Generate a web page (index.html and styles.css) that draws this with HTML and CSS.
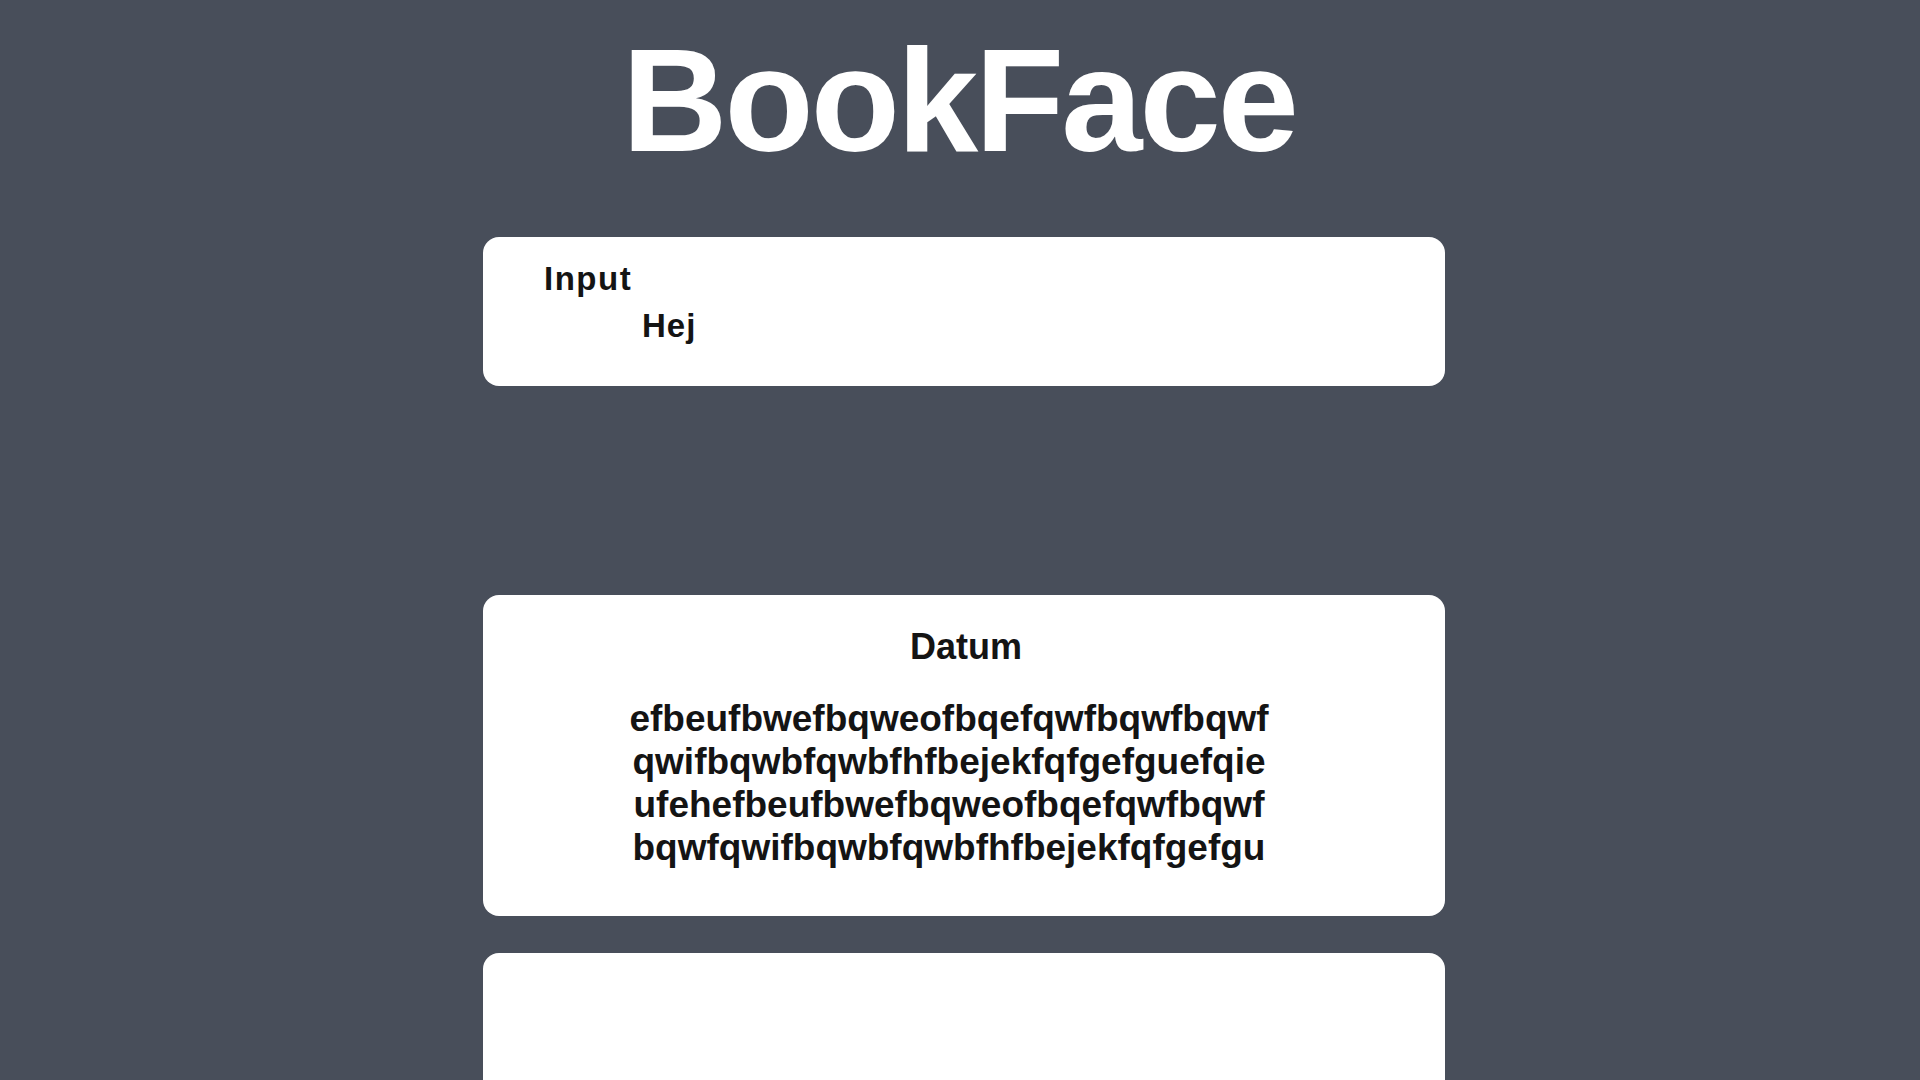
FILE: index.html
```html
<!DOCTYPE html>
<html lang="sv">
<head>
<meta charset="utf-8">
<title>BookFace</title>
<link rel="stylesheet" href="styles.css">
</head>
<body>
<div class="page">
  <header class="header">
    <h1 class="logo">BookFace</h1>
  </header>
  <section class="card card-input">
    <div class="input-label">Input</div>
    <div class="input-value">Hej</div>
  </section>
  <section class="card card-post">
    <div class="post-date">Datum</div>
    <div class="post-text">efbeufbwefbqweofbqefqwfbqwfbqwf<br>qwifbqwbfqwbfhfbejekfqfgefguefqie<br>ufehefbeufbwefbqweofbqefqwfbqwf<br>bqwfqwifbqwbfqwbfhfbejekfqfgefgu</div>
  </section>
  <section class="card card-empty"></section>
</div>
</body>
</html>
```
FILE: styles.css
```css
html, body {
  margin: 0;
  padding: 0;
  overflow: hidden;
}
body {
  background: #484e5a;
  font-family: "Liberation Sans", Arial, sans-serif;
  color: #141414;
}
.page {
  display: flex;
  flex-direction: column;
  align-items: center;
  padding-left: 8px;
}
.header {
  padding-top: 28px;
  padding-right: 10px;
}
.logo {
  margin: 0;
  font-size: 146px;
  line-height: 146px;
  font-weight: 700;
  color: #ffffff;
  letter-spacing: -3px;
  text-align: center;
}
.card {
  width: 962px;
  background: #ffffff;
  border-radius: 16px;
  box-sizing: border-box;
}
.card-input {
  margin-top: 63px;
  padding: 18px 0 37px 61px;
  font-size: 33px;
  line-height: 47px;
  font-weight: 700;
}
.input-label {
  letter-spacing: 1.5px;
}
.input-value {
  margin-left: 98px;
  letter-spacing: 1px;
}
.card-post {
  margin-top: 209px;
  padding: 32px 0 47px;
  text-align: center;
  font-weight: 700;
}
.post-date {
  font-size: 36px;
  line-height: 40px;
  padding-left: 4px;
}
.post-text {
  margin-top: 30px;
  padding-right: 30px;
  font-size: 37px;
  line-height: 43px;
}
.card-empty {
  margin-top: 37px;
  height: 300px;
}
```
